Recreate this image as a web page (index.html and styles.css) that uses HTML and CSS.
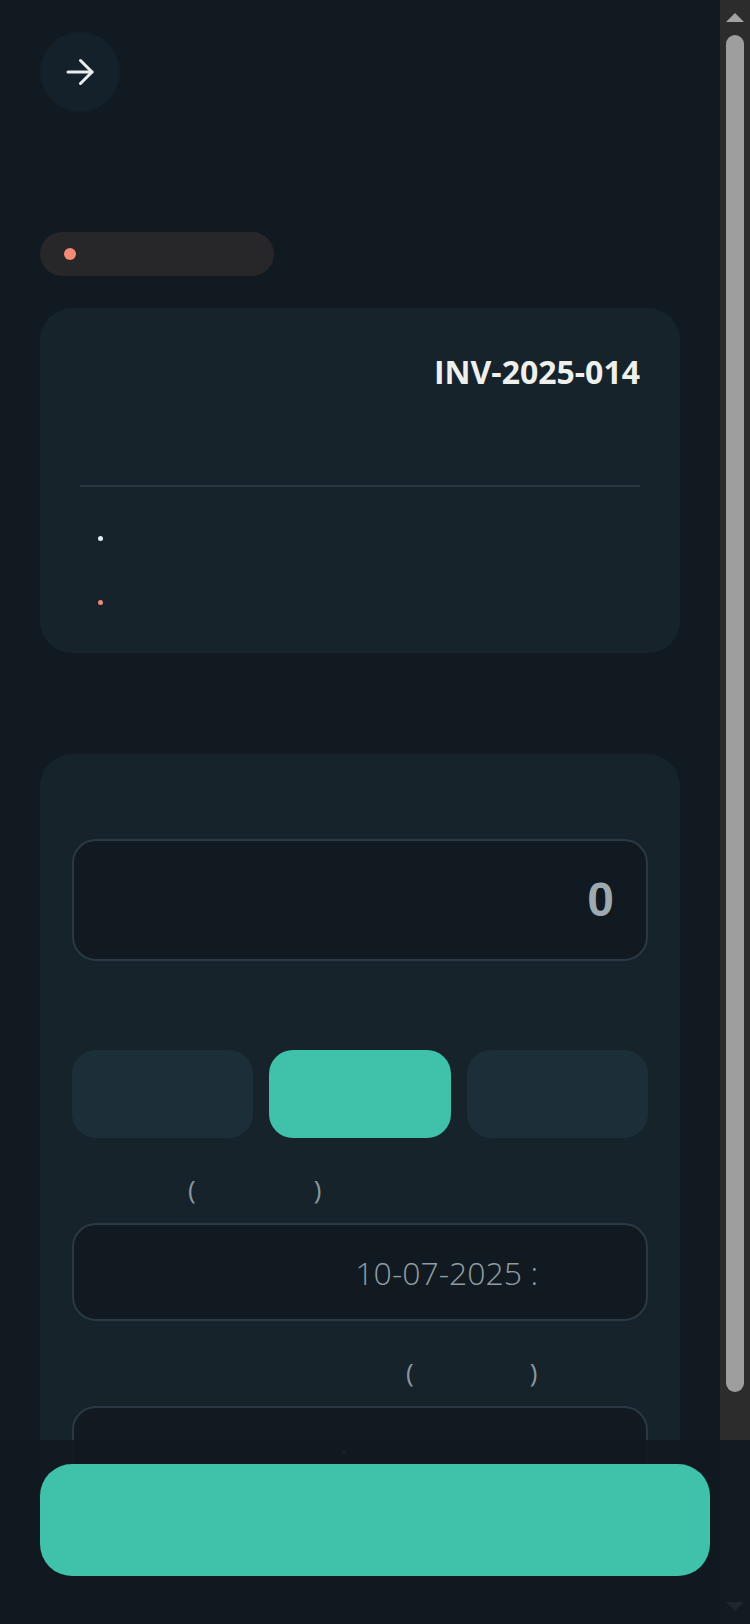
FILE: index.html
```html
<!DOCTYPE html>
<html lang="ar">
<head>
<meta charset="utf-8">
<title>INV-2025-014</title>
<link rel="stylesheet" href="styles.css">
</head>
<body>
    <div class="page">
        <div class="top">
            <button class="back">
                <svg width="28" height="28" viewBox="0 0 28 28" fill="none" stroke="#e9edef" stroke-width="3" stroke-linecap="round" stroke-linejoin="round">
                    <path d="M2 14H26"/>
                    <path d="M14.5 2.5L26 14L14.5 25.5"/>
                </svg>
            </button>
        </div>

        <div class="status"><span class="status-dot"></span><span class="status-text"></span></div>

        <section class="card summary">
            <div class="summary-head">
                <span class="summary-label"></span>
                <span class="inv">INV-2025-014</span>
            </div>
            <div class="divider"></div>
            <ul class="lines">
                <li><span class="bullet"></span></li>
                <li><span class="bullet bullet-red"></span></li>
            </ul>
        </section>

        <section class="card form">
            <div class="field-label first"></div>
            <div class="box amount">0</div>

            <div class="field-label"></div>
            <div class="seg">
                <button class="seg-btn"></button>
                <button class="seg-btn active"></button>
                <button class="seg-btn"></button>
            </div>

            <div class="field-label small lbl-date">(<span class="gap"></span>)</div>
            <div class="box date">10-07-2025 :</div>

            <div class="field-label small lbl-note">(<span class="gap"></span>)</div>
            <div class="box note"><span class="ph-dot"></span></div>
        </section>
    </div>

    <!-- scroll rail -->
    <div class="rail">
        <div class="rail-btn">
            <svg width="18" height="9" viewBox="0 0 18 9"><path d="M0 9L9 0L18 9Z" fill="#a3a3a3"/></svg>
        </div>
        <div class="rail-track"><div class="rail-thumb"></div></div>
        <div class="rail-btn">
            <svg width="18" height="9" viewBox="0 0 18 9"><path d="M0 0L9 9L18 0Z" fill="#a3a3a3"/></svg>
        </div>
    </div>

    <div class="bar">
        <button class="submit"></button>
    </div>
</body>
</html>
```

FILE: styles.css
```css
*{
    margin:0;
    padding:0;
    box-sizing:border-box;
}
html, body{
    height:100%;
}
body{
    background:#111a20;
    color:#eef0ee;
    font-family:"Open Sans", "Noto Sans", sans-serif;
    overflow:hidden;
    display:flex;
}
button{
    border:none;
    font:inherit;
    cursor:pointer;
}

/* scroll area */
.page{
    flex:1;
    min-width:0;
    height:100vh;
    overflow-y:auto;
    padding:32px 40px 323px;
}
.rail{
    width:30px;
    height:100vh;
    background:#2c2c2c;
    display:flex;
    flex-direction:column;
}
.rail-btn{
    height:32px;
    display:flex;
    align-items:center;
    justify-content:center;
    padding-top:3px;
}
.rail-btn:last-child{
    padding-top:0;
    padding-bottom:3px;
}
.rail-track{
    flex:1;
    padding:3px 6px;
}
.rail-thumb{
    height:1357px;
    border-radius:9px;
    background:#9e9e9e;
}

/* header */
.top{
    height:80px;
    margin-bottom:120px;
}
.back{
    width:80px;
    height:80px;
    border-radius:50%;
    background:#15212a;
    display:flex;
    align-items:center;
    justify-content:center;
}
.status{
    display:flex;
    align-items:center;
    width:234px;
    height:44px;
    border-radius:22px;
    background:#27272a;
    padding-left:24px;
    margin-bottom:32px;
}
.status-dot{
    width:12px;
    height:12px;
    border-radius:50%;
    background:#f28b73;
}

/* cards */
.card{
    background:#17232b;
    border-radius:32px;
}
.summary{
    padding:43px 40px 31px;
    margin-bottom:101px;
}
.summary-head{
    display:flex;
    justify-content:space-between;
    height:42px;
}
.inv{
    font-size:32px;
    line-height:42px;
    font-weight:700;
    color:#eef0ee;
}
.divider{
    height:2px;
    background:#2a3842;
    margin-top:92px;
}
.lines{
    list-style:none;
    margin-top:31px;
}
.lines li{
    height:40px;
    display:flex;
    align-items:center;
    padding-left:18px;
}
.lines li + li{
    margin-top:24px;
}
.bullet{
    width:5px;
    height:5px;
    border-radius:50%;
    background:#e6ecee;
}
.bullet-red{
    background:#ee8a78;
}

.form{
    padding:32px 32px 32px;
}
.field-label{
    height:37px;
    margin:36px 0 16px;
    font-size:26px;
    line-height:37px;
    color:#8b979e;
}
.field-label.first{
    margin-top:0;
}
.field-label.small{
    margin:33px 0 15px;
}
.lbl-date{
    padding-left:116px;
}
.lbl-date .gap{
    display:inline-block;
    width:118px;
}
.lbl-note{
    padding-left:334px;
}
.lbl-note .gap{
    display:inline-block;
    width:116px;
}

.box{
    background:#101a20;
    border:2px solid #2a3943;
    border-radius:24px;
    display:flex;
    align-items:center;
}
.amount{
    height:122px;
    justify-content:flex-end;
    padding-right:32px;
    font-family:"Liberation Sans", Arial, sans-serif;
    font-weight:700;
    font-size:48px;
    line-height:1;
    color:#9eaab0;
}
.seg{
    display:grid;
    grid-template-columns:1fr 1fr 1fr;
    gap:16px;
}
.seg-btn{
    height:88px;
    border-radius:24px;
    background:#1c2f38;
}
.seg-btn.active{
    background:#40c1aa;
}
.date{
    height:98px;
    justify-content:flex-end;
    padding-right:108px;
    font-size:32px;
    font-weight:300;
    color:#909ca2;
}
.note{
    height:98px;
    padding-left:268px;
    align-items:flex-start;
    padding-top:43px;
}
.ph-dot{
    width:4px;
    height:4px;
    border-radius:50%;
    background:#56646c;
}

/* bottom bar */
.bar{
    position:fixed;
    left:0;
    right:0;
    bottom:0;
    height:184px;
    padding:24px 40px 48px;
    background:rgba(17, 26, 32, 0.9);
    z-index:5;
}
.submit{
    width:100%;
    height:112px;
    border-radius:32px;
    background:#40c1aa;
}
```
